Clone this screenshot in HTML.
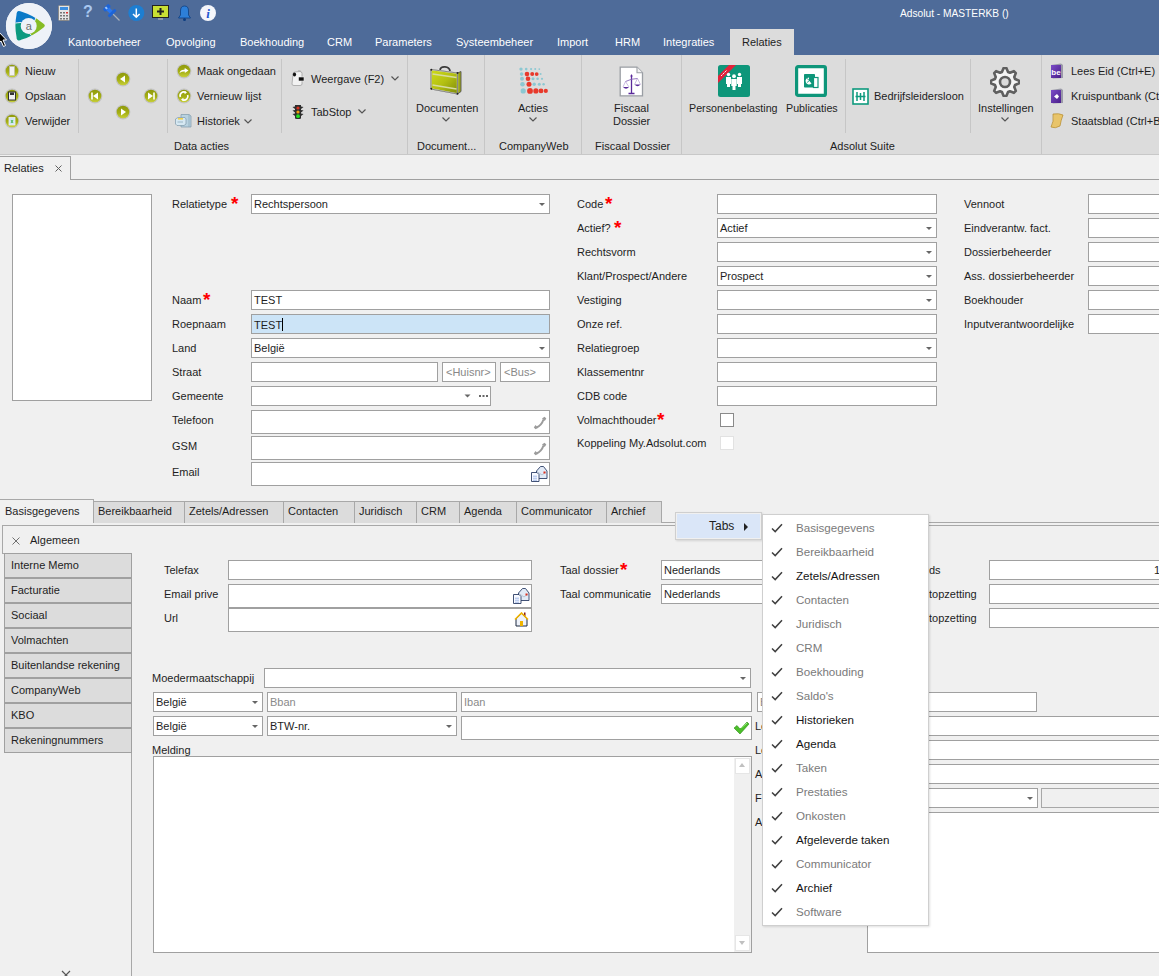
<!DOCTYPE html>
<html><head><meta charset="utf-8">
<style>
*{box-sizing:border-box;margin:0;padding:0}
html,body{width:1159px;height:976px;overflow:hidden;background:#f0f0f0;font-family:"Liberation Sans",sans-serif;font-size:11px;color:#1e1e1e}
.a{position:absolute}
.t{position:absolute;white-space:nowrap;line-height:13px}
#hdr{position:absolute;left:0;top:0;width:1159px;height:55px;background:#4e6b99}
.mi{position:absolute;top:36px;color:#fff;line-height:13px;white-space:nowrap}
#rib{position:absolute;left:0;top:55px;width:1159px;height:100px;background:#dcdcdc;border-bottom:1px solid #c8c8c8}
.sep{position:absolute;top:4px;width:1px;height:74px;background:#c4c4c4}
.gsep{position:absolute;top:0;width:1px;height:99px;background:#c4c4c4}
.gl{position:absolute;top:85px;line-height:13px;white-space:nowrap;color:#1e1e1e}
.inp{position:absolute;background:#fff;border:1px solid #a0a0a0;height:20px}
.dd::after{content:"";position:absolute;right:4px;top:8px;border-left:3px solid transparent;border-right:3px solid transparent;border-top:3px solid #666}
.it{position:absolute;left:2px;top:3px;line-height:13px;white-space:nowrap}
.req{position:absolute;color:#f00;font-size:19px;font-weight:bold;line-height:13px}
.chk{position:absolute;width:14px;height:14px;background:#fff;border:1px solid #8a8a8a}
.tab{position:absolute;top:501px;height:22px;background:#dcdcdc;border:1px solid #a8a8a8;border-bottom:none}
.tab span{position:absolute;left:4px;top:3px;line-height:13px;white-space:nowrap}
.nav{position:absolute;left:4px;width:128px;height:25px;background:#dcdcdc;border:1px solid #a0a0a0}
.nav span{position:absolute;left:6px;top:5px;line-height:13px;white-space:nowrap}
.mn{position:absolute;left:33px;line-height:14px;white-space:nowrap;font-size:12px}
.mn.g{color:#8c8c8c}
.ck{position:absolute;left:8px;width:12px;height:10px}
</style></head><body>

<!-- HEADER -->
<div id="hdr">
  <div class="a" style="left:6px;top:3px;width:46px;height:46px;border-radius:50%;background:#fff"></div>
  <div class="t" style="left:900px;top:7px;color:#fff;font-size:10.2px">Adsolut - MASTERKB ()</div>
  <div class="mi" style="left:68px">Kantoorbeheer</div>
  <div class="mi" style="left:166px">Opvolging</div>
  <div class="mi" style="left:240px">Boekhouding</div>
  <div class="mi" style="left:327px">CRM</div>
  <div class="mi" style="left:375px">Parameters</div>
  <div class="mi" style="left:456px">Systeembeheer</div>
  <div class="mi" style="left:557px">Import</div>
  <div class="mi" style="left:615px">HRM</div>
  <div class="mi" style="left:663px">Integraties</div>
  <div class="a" style="left:730px;top:29px;width:64px;height:26px;background:#dcdcdc"></div>
  <div class="mi" style="left:742px;color:#1e1e1e">Relaties</div>
</div>

<!-- RIBBON -->
<div id="rib"></div>
<svg width="0" height="0" style="position:absolute"><defs>
<linearGradient id="olv" x1="0" y1="0" x2="0" y2="1"><stop offset="0" stop-color="#8f9a0c"/><stop offset="0.55" stop-color="#a4ae14"/><stop offset="1" stop-color="#c8d03a"/></linearGradient>
<linearGradient id="brf" x1="0" y1="0" x2="1" y2="1"><stop offset="0" stop-color="#cfdc1a"/><stop offset="0.5" stop-color="#b4c012"/><stop offset="1" stop-color="#7e8a0a"/></linearGradient>
<linearGradient id="prp" x1="0" y1="0" x2="1" y2="1"><stop offset="0" stop-color="#7b4cc8"/><stop offset="1" stop-color="#4a1f8a"/></linearGradient>
</defs></svg>
<svg class="a" style="left:5px;top:2px" width="48" height="48" viewBox="0 0 48 48"><defs><clipPath id="lgc"><path d="M21.77,11.80 Q33.03,15.31 42.23,22.70 Q47.50,25.50 42.23,28.39 Q33.06,35.93 21.77,39.61 Q16.50,42.50 16.50,36.80 Q14.30,25.75 16.50,14.70 Q16.50,9.00 21.77,11.80 Z"/></clipPath></defs><g transform="translate(-5,-2)"><circle cx="28.9" cy="25.9" r="23" fill="#eef2f8"/><g clip-path="url(#lgc)"><path d="M34.83,20.76 L36.73,14.43 L38.96,-2.29 L46.01,1.40 L51.85,6.82 L56.05,13.58 L58.33,21.21 L58.52,29.17 L56.61,36.90 L52.74,43.85 L47.17,49.54 L34.17,38.79 L29.81,33.82 Z" fill="#86bc25"/><path d="M29.81,33.82 L34.17,38.79 L47.17,49.54 L40.06,53.67 L32.10,55.71 L23.88,55.51 L16.02,53.09 L9.12,48.63 L3.68,42.46 L0.13,35.05 L-1.28,26.95 L15.01,22.99 L21.51,22.39 Z" fill="#0c9a80"/><path d="M21.51,22.39 L15.01,22.99 L-1.28,26.95 L-0.64,19.66 L1.74,12.75 L5.72,6.62 L11.07,1.63 L17.46,-1.92 L24.52,-3.81 L31.84,-3.94 L38.96,-2.29 L36.73,14.43 L34.83,20.76 Z" fill="#0a7ac8"/><path d="M34.83,20.76 Q37.30,13.61 38.96,-2.29" fill="none" stroke="#eef2f8" stroke-width="0.9"/><path d="M29.81,33.82 Q34.56,39.71 47.17,49.54" fill="none" stroke="#eef2f8" stroke-width="0.9"/><path d="M21.51,22.39 Q14.03,22.78 -1.28,26.95" fill="none" stroke="#eef2f8" stroke-width="0.9"/></g><circle cx="28.7" cy="25.9" r="8" fill="#eef2f8"/><text x="28.7" y="29.5" font-family="Liberation Sans" font-size="11" fill="#6d6d6d" text-anchor="middle">a</text></g></svg>
<svg class="a" style="left:-2px;top:31px" width="10" height="18" viewBox="0 0 10 18"><path d="M0.5 0.5 L0.5 12 L3 10 L5.5 15.5 L7.5 14.5 L5 9 L8.5 9 Z" fill="#000" stroke="#fff" stroke-width="1"/></svg>
<svg class="a" style="left:58px;top:5px" width="12" height="16" viewBox="0 0 12 16"><rect x="0.5" y="0.5" width="11" height="15" rx="1" fill="#e6e6e6" stroke="#8a8a8a"/><rect x="2" y="2" width="8" height="3" fill="#3d8fe0"/><g fill="#777"><rect x="2" y="7" width="2" height="1.5"/><rect x="5" y="7" width="2" height="1.5"/><rect x="8" y="7" width="2" height="1.5" fill="#d33"/><rect x="2" y="10" width="2" height="1.5"/><rect x="5" y="10" width="2" height="1.5"/><rect x="8" y="10" width="2" height="1.5"/><rect x="2" y="13" width="2" height="1.5"/><rect x="5" y="13" width="2" height="1.5"/><rect x="8" y="13" width="2" height="1.5"/></g></svg>
<div class="t" style="left:83px;top:3px;font-size:16px;line-height:18px;color:#a9c8f0;font-weight:bold">?</div>
<svg class="a" style="left:103px;top:4px" width="18" height="18" viewBox="0 0 18 18"><path d="M9.5 9.5 L16.5 16.5" stroke="#a8b0b8" stroke-width="1.3"/><g transform="rotate(-45 7 7)"><rect x="3" y="0.5" width="8" height="4" rx="1.5" fill="#1c64d8"/><rect x="5" y="4" width="4" height="5" fill="#2a78f0"/><rect x="2" y="8.5" width="10" height="3" rx="1" fill="#1c64d8"/><rect x="5.5" y="1" width="2" height="2.5" fill="#9cc8ff"/></g></svg>
<svg class="a" style="left:128px;top:5px" width="17" height="17" viewBox="0 0 17 17"><circle cx="8.3" cy="8" r="8" fill="#1d7ed2"/><path d="M8.3 3.5 V12 M5 9 L8.3 12.3 L11.6 9" fill="none" stroke="#fff" stroke-width="1.5"/></svg>
<svg class="a" style="left:152px;top:5px" width="17" height="16" viewBox="0 0 17 16"><rect x="0.5" y="0.5" width="16" height="12" fill="#c8e034" stroke="#222"/><path d="M8.5 3 V10 M5 6.5 H12" stroke="#222" stroke-width="2"/><rect x="6" y="13" width="5" height="2" fill="#8896aa"/></svg>
<svg class="a" style="left:178px;top:5px" width="13" height="16" viewBox="0 0 13 16"><path d="M6.5 1 Q10.5 1 10.5 6 L10.5 10 L12.5 13 L0.5 13 L2.5 10 L2.5 6 Q2.5 1 6.5 1 Z" fill="#2d7fd8" stroke="#0d3d80" stroke-width="0.8"/><circle cx="6.5" cy="14.5" r="1.5" fill="#0d3d80"/></svg>
<svg class="a" style="left:200px;top:5px" width="17" height="17" viewBox="0 0 17 17"><circle cx="8" cy="8" r="8" fill="#f4f6fb"/><text x="8" y="13" font-family="Liberation Serif" font-style="italic" font-weight="bold" font-size="13" fill="#2355d0" text-anchor="middle">i</text></svg>
<div class="a" style="left:78px;top:59px;width:1px;height:74px;background:#c6c6c6"></div>
<div class="a" style="left:167px;top:59px;width:1px;height:74px;background:#c6c6c6"></div>
<div class="a" style="left:281px;top:59px;width:1px;height:74px;background:#c6c6c6"></div>
<div class="a" style="left:845px;top:59px;width:1px;height:74px;background:#c6c6c6"></div>
<div class="a" style="left:970px;top:59px;width:1px;height:74px;background:#c6c6c6"></div>
<div class="a" style="left:407px;top:55px;width:1px;height:99px;background:#c6c6c6"></div>
<div class="a" style="left:484px;top:55px;width:1px;height:99px;background:#c6c6c6"></div>
<div class="a" style="left:581px;top:55px;width:1px;height:99px;background:#c6c6c6"></div>
<div class="a" style="left:681px;top:55px;width:1px;height:99px;background:#c6c6c6"></div>
<div class="a" style="left:1041px;top:55px;width:1px;height:99px;background:#c6c6c6"></div>
<svg class="a" style="left:4px;top:63px" width="16" height="16" viewBox="0 0 16 16"><circle cx="8" cy="8" r="7.4" fill="#c4c4c4"/><circle cx="8" cy="8" r="6.3" fill="url(#olv)"/><rect x="5.5" y="3.5" width="5" height="9" fill="#f2f2f2" stroke="#bbb" stroke-width="0.6"/></svg>
<svg class="a" style="left:4px;top:88px" width="16" height="16" viewBox="0 0 16 16"><circle cx="8" cy="8" r="7.4" fill="#c4c4c4"/><circle cx="8" cy="8" r="6.3" fill="url(#olv)"/><rect x="4.5" y="4" width="7" height="8" fill="#f0f0f0" stroke="#333" stroke-width="1"/><rect x="6" y="4.5" width="4" height="2.5" fill="#333"/></svg>
<svg class="a" style="left:4px;top:113px" width="16" height="16" viewBox="0 0 16 16"><circle cx="8" cy="8" r="7.4" fill="#c4c4c4"/><circle cx="8" cy="8" r="6.3" fill="url(#olv)"/><rect x="5" y="4.5" width="6" height="7.5" fill="#cfe6f5" stroke="#eee" stroke-width="0.8"/><path d="M7 7 L9 10 M9 7 L7 10" stroke="#3a3" stroke-width="0.8"/></svg>
<div class="t" style="left:25px;top:65px;">Nieuw</div>
<div class="t" style="left:25px;top:90px;">Opslaan</div>
<div class="t" style="left:25px;top:115px;">Verwijder</div>
<svg class="a" style="left:115px;top:71px" width="16" height="16" viewBox="0 0 16 16"><circle cx="8" cy="8" r="7.4" fill="#c4c4c4"/><circle cx="8" cy="8" r="6.3" fill="url(#olv)"/><path d="M10 4.5 L5 8 L10 11.5 Z" fill="#fff"/></svg>
<svg class="a" style="left:115px;top:104px" width="16" height="16" viewBox="0 0 16 16"><circle cx="8" cy="8" r="7.4" fill="#c4c4c4"/><circle cx="8" cy="8" r="6.3" fill="url(#olv)"/><path d="M6 4.5 L11 8 L6 11.5 Z" fill="#fff"/></svg>
<svg class="a" style="left:87px;top:88px" width="16" height="16" viewBox="0 0 16 16"><circle cx="8" cy="8" r="7.4" fill="#c4c4c4"/><circle cx="8" cy="8" r="6.3" fill="url(#olv)"/><path d="M5 4.5 V11.5" stroke="#fff" stroke-width="1.6"/><path d="M11 4.5 L6 8 L11 11.5 Z" fill="#fff"/></svg>
<svg class="a" style="left:143px;top:88px" width="16" height="16" viewBox="0 0 16 16"><circle cx="8" cy="8" r="7.4" fill="#c4c4c4"/><circle cx="8" cy="8" r="6.3" fill="url(#olv)"/><path d="M11 4.5 V11.5" stroke="#fff" stroke-width="1.6"/><path d="M5 4.5 L10 8 L5 11.5 Z" fill="#fff"/></svg>
<svg class="a" style="left:176px;top:63px" width="16" height="16" viewBox="0 0 16 16"><circle cx="8" cy="8" r="7.4" fill="#c4c4c4"/><circle cx="8" cy="8" r="6.3" fill="url(#olv)"/><path d="M3.5 10 Q4.5 6.5 8.5 6.8 L8.8 5 L12.5 7.6 L8.8 10 L8.8 8.6 Q6 8.4 3.5 10 Z" fill="#fff"/></svg>
<svg class="a" style="left:176px;top:88px" width="16" height="16" viewBox="0 0 16 16"><circle cx="8" cy="8" r="7.4" fill="#c4c4c4"/><circle cx="8" cy="8" r="6.3" fill="url(#olv)"/><path d="M4.3 9 A3.8 3.8 0 0 1 9.5 4.3" fill="none" stroke="#fff" stroke-width="1.7"/><path d="M8.5 2.8 L11 4.6 L8.6 6.2 Z" fill="#fff"/><path d="M11.7 7 A3.8 3.8 0 0 1 6.5 11.7" fill="none" stroke="#fff" stroke-width="1.7"/><path d="M7.5 13.2 L5 11.4 L7.4 9.8 Z" fill="#fff"/></svg>
<svg class="a" style="left:175px;top:114px" width="17" height="14" viewBox="0 0 17 14"><path d="M6 0.5 H14 L16 2 V13 H6 Z" fill="#b8d2e0" stroke="#7e9aaa" stroke-width="0.7"/><path d="M14 0.5 V13" stroke="#8eaabb" stroke-width="0.8"/><path d="M0.5 5 L3 3.5 H10 L11 5 V10 L9 11.5 H2 L0.5 10 Z" fill="#d6e8f2" stroke="#7e9aaa" stroke-width="0.7"/><rect x="3" y="4" width="5" height="1.6" fill="#f2d24a"/><path d="M2.5 8 H8" stroke="#8eaabb" stroke-width="0.8"/></svg>
<div class="t" style="left:197px;top:65px;">Maak ongedaan</div>
<div class="t" style="left:197px;top:90px;">Vernieuw lijst</div>
<div class="t" style="left:197px;top:115px;">Historiek</div>
<svg class="a" style="left:244px;top:119px" width="8" height="5" viewBox="0 0 8 5"><path d="M0.5 0.5 L4 4 L7.5 0.5" fill="none" stroke="#555" stroke-width="1.2"/></svg>
<div class="t" style="left:174px;top:140px;">Data acties</div>
<svg class="a" style="left:291px;top:70px" width="14" height="16" viewBox="0 0 14 16"><path d="M2 4 Q2 2 4 2 L9 1.5 Q11 1.5 11 3.5 L11 14 Q11 15.5 9 15.5 L3 15.5 Q1 15.5 1 14 Z" fill="#f2f2f2" stroke="#9a9a9a" stroke-width="0.7"/><ellipse cx="3.5" cy="4.5" rx="1.6" ry="2" fill="#111"/><rect x="7.5" y="7" width="5.5" height="4" fill="#111" stroke="#eee" stroke-width="0.6"/><path d="M7 0.8 Q9 0 10 1.5" fill="none" stroke="#aaa" stroke-width="0.8"/></svg>
<div class="t" style="left:311px;top:73px;">Weergave (F2)</div>
<svg class="a" style="left:391px;top:76px" width="8" height="5" viewBox="0 0 8 5"><path d="M0.5 0.5 L4 4 L7.5 0.5" fill="none" stroke="#555" stroke-width="1.2"/></svg>
<svg class="a" style="left:292px;top:104px" width="12" height="16" viewBox="0 0 12 16"><path d="M3 1 H9 L9 2.5 L11.5 3 L9 5 V6 L11.5 6.5 L9 8.5 V9.5 L11.5 10 L9 12 V14.5 Q6 15.5 3 14.5 V12 L0.5 10 L3 9.5 V8.5 L0.5 6.5 L3 6 V5 L0.5 3 L3 2.5 Z" fill="#2e2e2e"/><circle cx="6" cy="4" r="1.6" fill="#d8321e"/><circle cx="6" cy="8" r="1.6" fill="#f29a0e"/><circle cx="6" cy="12.2" r="1.9" fill="#22e022"/></svg>
<div class="t" style="left:311px;top:106px;">TabStop</div>
<svg class="a" style="left:358px;top:109px" width="8" height="5" viewBox="0 0 8 5"><path d="M0.5 0.5 L4 4 L7.5 0.5" fill="none" stroke="#555" stroke-width="1.2"/></svg>
<svg class="a" style="left:428px;top:64px" width="36" height="32" viewBox="0 0 36 32"><path d="M12 6 Q12.5 2.5 17 2.8 Q21.5 3.2 22 7" fill="none" stroke="#3a3a3a" stroke-width="1.8"/><path d="M3 5.5 L29.5 9 L33 7.5 L33 27.5 L29.5 30 L3 25 Z" fill="#9aa414" stroke="#555" stroke-width="0.9"/><path d="M3 5.5 L29.5 9 L29.5 30 L3 25 Z" fill="url(#brf)" stroke="#e8e8e8" stroke-width="1.3"/><path d="M4.5 10 L28.5 13.5 M4.5 21 L28.5 25" stroke="#d6dba0" stroke-width="1.3"/><path d="M3 5.5 L29.5 9 L29.5 30 L3 25 Z" fill="none" stroke="#444" stroke-width="0.6"/><circle cx="3.3" cy="5.8" r="1" fill="#222"/><circle cx="29.5" cy="9" r="1" fill="#222"/><circle cx="29.5" cy="29.8" r="1" fill="#222"/><circle cx="3.3" cy="24.8" r="1" fill="#222"/></svg>
<div class="t" style="left:416px;top:102px;">Documenten</div>
<svg class="a" style="left:442px;top:117px" width="8" height="5" viewBox="0 0 8 5"><path d="M0.5 0.5 L4 4 L7.5 0.5" fill="none" stroke="#555" stroke-width="1.2"/></svg>
<div class="t" style="left:417px;top:140px;">Document...</div>
<svg class="a" style="left:510px;top:62px" width="40" height="36" viewBox="0 0 40 36"><circle cx="11.0" cy="7.1" r="1.7" fill="#8cc8d2"/><circle cx="16.2" cy="7.1" r="1.3" fill="#8cc8d2"/><circle cx="21.1" cy="7.1" r="1.1" fill="#8cc8d2"/><circle cx="25.2" cy="7.1" r="1.0" fill="#8cc8d2"/><circle cx="29.3" cy="7.1" r="0.9" fill="#8cc8d2"/><circle cx="11.6" cy="12.1" r="1.8" fill="#8cc8d2"/><circle cx="17.0" cy="12.1" r="2.3" fill="#e8392b"/><circle cx="22.2" cy="12.1" r="2.0" fill="#e8392b"/><circle cx="26.7" cy="12.1" r="1.9" fill="#e8392b"/><circle cx="30.6" cy="12.1" r="1.0" fill="#8cc8d2"/><circle cx="12.0" cy="16.8" r="2.0" fill="#8cc8d2"/><circle cx="18.0" cy="16.8" r="2.3" fill="#e8392b"/><circle cx="23.0" cy="16.8" r="1.5" fill="#8cc8d2"/><circle cx="27.6" cy="16.8" r="1.3" fill="#8cc8d2"/><circle cx="32.0" cy="16.8" r="1.1" fill="#8cc8d2"/><circle cx="12.5" cy="22.2" r="2.3" fill="#8cc8d2"/><circle cx="19.0" cy="22.2" r="2.5" fill="#e8392b"/><circle cx="24.2" cy="22.2" r="1.7" fill="#8cc8d2"/><circle cx="29.3" cy="22.2" r="1.5" fill="#8cc8d2"/><circle cx="33.6" cy="22.2" r="1.2" fill="#8cc8d2"/><circle cx="13.2" cy="28.9" r="2.6" fill="#8cc8d2"/><circle cx="20.0" cy="28.9" r="2.9" fill="#e8392b"/><circle cx="25.9" cy="28.9" r="2.6" fill="#e8392b"/><circle cx="31.0" cy="28.9" r="2.4" fill="#e8392b"/><circle cx="35.8" cy="28.9" r="2.1" fill="#e8392b"/></svg>
<div class="t" style="left:518px;top:102px;">Acties</div>
<svg class="a" style="left:529px;top:117px" width="8" height="5" viewBox="0 0 8 5"><path d="M0.5 0.5 L4 4 L7.5 0.5" fill="none" stroke="#555" stroke-width="1.2"/></svg>
<div class="t" style="left:499px;top:140px;">CompanyWeb</div>
<svg class="a" style="left:619px;top:66px" width="25" height="31" viewBox="0 0 25 31"><path d="M1.2 1.2 H18 L23.5 6.7 V29.8 H1.2 Z" fill="#fff" stroke="#9a9ea4" stroke-width="1.3"/><path d="M18 1.2 V6.7 H23.5" fill="#f2f2f2" stroke="#9a9ea4" stroke-width="1.1"/><path d="M12.5 9 V27 M9.5 27.5 H15.5" stroke="#5a2a9a" stroke-width="1.3"/><path d="M6.5 15.5 Q12.5 12.5 18.5 12.5" fill="none" stroke="#8a6ab8" stroke-width="0.9"/><path d="M4 21 Q7 24.5 10 21 Z" fill="#5a2a9a"/><path d="M15.5 18.5 Q18.5 22 21.5 18.5 Z" fill="#5a2a9a"/><path d="M6.5 15.5 L4 21 M6.5 15.5 L10 21 M18.5 12.5 L15.5 18.5 M18.5 12.5 L21.5 18.5" stroke="#a890cc" stroke-width="0.6"/><path d="M12.5 8 L11.3 10.5 H13.7 Z" fill="#5a2a9a"/></svg>
<div class="t" style="left:614px;top:102px;">Fiscaal</div>
<div class="t" style="left:613px;top:115px;">Dossier</div>
<div class="t" style="left:595px;top:140px;">Fiscaal Dossier</div>
<svg class="a" style="left:718px;top:65px" width="32" height="32" viewBox="0 0 32 32"><defs><clipPath id="pbc"><rect x="0" y="0" width="32" height="32" rx="2.5"/></clipPath></defs><rect x="0" y="0" width="32" height="32" rx="2.5" fill="#0e967a"/><g clip-path="url(#pbc)"><path d="M0 11 L11 0 L18 0 L0 18 Z" fill="#e3213a"/></g><g fill="#fff"><circle cx="10.5" cy="9.5" r="1.7"/><circle cx="16" cy="11.2" r="1.9"/><circle cx="21.5" cy="9.5" r="1.7"/><path d="M8 12 H13 V19 H12 V22 H9 V19 H8 Z M13.3 14 H18.7 V21 H17.5 V25 H14.5 V21 H13.3 Z M19 12 H24 V19 H23 V22 H20 V19 H19 Z"/></g><path d="M3 11 L4.5 9.5 M5 9 L6.5 7.5 M7 7 L8.5 5.5" stroke="#fff" stroke-width="0.9"/></svg>
<div class="t" style="left:689px;top:102px;font-size:10.7px">Personenbelasting</div>
<svg class="a" style="left:795px;top:65px" width="32" height="32" viewBox="0 0 32 32"><rect x="1.6" y="1.6" width="28.8" height="28.8" rx="1.5" fill="#fff" stroke="#0e967a" stroke-width="3.2"/><rect x="9" y="9" width="11" height="13.5" rx="0.8" fill="#0e967a"/><rect x="18.5" y="12.5" width="4.5" height="10" fill="#fff" stroke="#0e967a" stroke-width="1.2"/><path d="M14 12.5 A3.5 3.5 0 1 0 16.5 18.5 L14 15.5 Z" fill="#fff"/><path d="M12 13.5 L14.5 15.5 L12 17.5" fill="none" stroke="#0e967a" stroke-width="0.8"/></svg>
<div class="t" style="left:786px;top:102px;font-size:10.7px">Publicaties</div>
<svg class="a" style="left:852px;top:88px" width="17" height="17" viewBox="0 0 17 17"><rect x="1" y="1" width="15" height="15" fill="#fff" stroke="#0e9a7e" stroke-width="1.6"/><path d="M5 4 V13 M8.5 5 V12 M12 4 V13 M3.5 8.5 H13.5" stroke="#0e9a7e" stroke-width="1.5"/></svg>
<div class="t" style="left:874px;top:90px;">Bedrijfsleidersloon</div>
<div class="t" style="left:830px;top:140px;">Adsolut Suite</div>
<svg class="a" style="left:990px;top:67px" width="30" height="30" viewBox="0 0 30 30"><polygon points="13.63,1.07 16.37,1.07 18.05,4.95 19.95,5.74 23.88,4.18 25.82,6.12 24.26,10.05 25.05,11.95 28.93,13.63 28.93,16.37 25.05,18.05 24.26,19.95 25.82,23.88 23.88,25.82 19.95,24.26 18.05,25.05 16.37,28.93 13.63,28.93 11.95,25.05 10.05,24.26 6.12,25.82 4.18,23.88 5.74,19.95 4.95,18.05 1.07,16.37 1.07,13.63 4.95,11.95 5.74,10.05 4.18,6.12 6.12,4.18 10.05,5.74 11.95,4.95" fill="#f4f4f4" stroke="#5f5f5f" stroke-width="2.6" stroke-linejoin="round"/><circle cx="15" cy="15" r="5" fill="#dcdcdc" stroke="#5f5f5f" stroke-width="2.6"/></svg>
<div class="t" style="left:978px;top:102px;">Instellingen</div>
<svg class="a" style="left:1001px;top:117px" width="8" height="5" viewBox="0 0 8 5"><path d="M0.5 0.5 L4 4 L7.5 0.5" fill="none" stroke="#555" stroke-width="1.2"/></svg>
<svg class="a" style="left:1050px;top:63px" width="14" height="16" viewBox="0 0 14 16"><path d="M1 2 L11 0.5 L13 2 L13 15 L3 15.5 L1 14 Z" fill="#9a9aa8"/><rect x="1" y="2" width="10" height="13" fill="url(#prp)"/><text x="6" y="12" font-family="Liberation Sans" font-weight="bold" font-size="8" fill="#fff" text-anchor="middle">be</text></svg>
<div class="t" style="left:1071px;top:65px;">Lees Eid (Ctrl+E)</div>
<svg class="a" style="left:1050px;top:88px" width="14" height="16" viewBox="0 0 14 16"><path d="M1 2 L11 0.5 L13 2 L13 15 L3 15.5 L1 14 Z" fill="#9a9aa8"/><rect x="1" y="2" width="10" height="13" fill="url(#prp)"/><path d="M4 8.5 L7 6 L9 8.5 L7 11 Z" fill="#fff"/></svg>
<div class="t" style="left:1071px;top:90px;">Kruispuntbank (Ctrl+K)</div>
<svg class="a" style="left:1050px;top:113px" width="14" height="16" viewBox="0 0 14 16"><path d="M3 1 Q9 0 13 2 Q11 7 10 13 Q5 16 1 14 Q4 9 3 1 Z" fill="#e8c46a" stroke="#b48a2a" stroke-width="0.7"/></svg>
<div class="t" style="left:1071px;top:115px;">Staatsblad (Ctrl+B)</div>

<!-- DOC TAB -->
<div class="a" style="left:0;top:179px;width:1159px;height:1px;background:#a0a0a0"></div>
<div class="a" style="left:0;top:156px;width:71px;height:24px;background:#f0f0f0;border:1px solid #a0a0a0;border-left:none;border-bottom:none"></div>
<div class="t" style="left:4px;top:162px">Relaties</div>
<svg class="a" style="left:55px;top:165px" width="7" height="7"><path d="M0.5 0.5 L6.5 6.5 M6.5 0.5 L0.5 6.5" stroke="#606060" stroke-width="1"/></svg>

<!-- FORM -->
<div class="a" style="left:12px;top:194px;width:140px;height:207px;background:#fff;border:1px solid #a0a0a0"></div>
<div class="t" style="left:172px;top:198px;">Relatietype</div>
<div class="req" style="left:231px;top:197px">*</div>
<div class="inp dd" style="left:251px;top:194px;width:299px;height:20px;"><span class="it" style="">Rechtspersoon</span></div>
<div class="t" style="left:172px;top:294px;">Naam</div>
<div class="req" style="left:203px;top:293px">*</div>
<div class="inp" style="left:251px;top:290px;width:299px;height:20px;"><span class="it" style="">TEST</span></div>
<div class="t" style="left:172px;top:318px;">Roepnaam</div>
<div class="inp" style="left:251px;top:314px;width:299px;height:20px;background:#cce4f7;border-color:#a0a0a0"><span class="it" style="">TEST<span style='display:inline-block;width:1px;height:13px;background:#000;vertical-align:-2px'></span></span></div>
<div class="t" style="left:172px;top:342px;">Land</div>
<div class="inp dd" style="left:251px;top:338px;width:299px;height:20px;"><span class="it" style="">België</span></div>
<div class="t" style="left:172px;top:366px;">Straat</div>
<div class="inp" style="left:251px;top:362px;width:187px;height:20px;"></div>
<div class="inp" style="left:442px;top:362px;width:54px;height:20px;"><span class="it" style="color:#888;left:3px">&lt;Huisnr&gt;</span></div>
<div class="inp" style="left:500px;top:362px;width:50px;height:20px;"><span class="it" style="color:#888;left:3px">&lt;Bus&gt;</span></div>
<div class="t" style="left:172px;top:390px;">Gemeente</div>
<div class="inp" style="left:251px;top:386px;width:240px;height:20px;"></div>
<svg class="a" style="left:464px;top:394px" width="8" height="5"><path d="M0.5 0.5 H6.5 L3.5 3.5 Z" fill="#666"/></svg>
<svg class="a" style="left:479px;top:395px" width="9" height="2"><rect x="0" y="0" width="2" height="2" fill="#666"/><rect x="3.5" y="0" width="2" height="2" fill="#666"/><rect x="7" y="0" width="2" height="2" fill="#666"/></svg>
<div class="t" style="left:172px;top:414px;">Telefoon</div>
<div class="inp" style="left:251px;top:410px;width:299px;height:24px;"></div>
<div class="t" style="left:172px;top:440px;">GSM</div>
<div class="inp" style="left:251px;top:436px;width:299px;height:24px;"></div>
<div class="t" style="left:172px;top:466px;">Email</div>
<div class="inp" style="left:251px;top:462px;width:299px;height:24px;"></div>
<svg class="a" style="left:533px;top:416px" width="14" height="14"><path d="M3.5 11.5 Q8.5 9.5 10.5 3.5" fill="none" stroke="#9c9c9c" stroke-width="2"/><path d="M9 2.5 L11.5 0.8 L13.3 2.6 L11.8 5 Z" fill="#9c9c9c"/><path d="M2.5 9 L0.8 11.5 L2.6 13.3 L5 11.8 Z" fill="#9c9c9c"/></svg>
<svg class="a" style="left:533px;top:442px" width="14" height="14"><path d="M3.5 11.5 Q8.5 9.5 10.5 3.5" fill="none" stroke="#9c9c9c" stroke-width="2"/><path d="M9 2.5 L11.5 0.8 L13.3 2.6 L11.8 5 Z" fill="#9c9c9c"/><path d="M2.5 9 L0.8 11.5 L2.6 13.3 L5 11.8 Z" fill="#9c9c9c"/></svg>
<svg class="a" style="left:531px;top:466px" width="17" height="16"><path d="M5.5 5 L9.5 0.5 H12.5 L16 5 V12.5 H5.5 Z" fill="#e2eaf6" stroke="#2c3e66" stroke-width="0.9"/><path d="M6 5.5 L11 9 L15.5 5.5" fill="none" stroke="#9ab" stroke-width="0.6"/><rect x="12.5" y="5.5" width="2" height="2" fill="#e0301e"/><path d="M0.5 6.5 H6 L8 8.5 V15.5 H0.5 Z" fill="#f8faff" stroke="#2c3e66" stroke-width="0.9"/><path d="M2 10.2 H6 M2 12.2 H6 M2 14.2 H6" stroke="#6a8fd8" stroke-width="0.6"/></svg>
<div class="t" style="left:577px;top:198px;">Code</div>
<div class="inp" style="left:717px;top:194px;width:220px;height:20px;"></div>
<div class="t" style="left:577px;top:222px;">Actief?</div>
<div class="inp dd" style="left:717px;top:218px;width:220px;height:20px;"><span class="it" style="">Actief</span></div>
<div class="t" style="left:577px;top:246px;">Rechtsvorm</div>
<div class="inp dd" style="left:717px;top:242px;width:220px;height:20px;"></div>
<div class="t" style="left:577px;top:270px;">Klant/Prospect/Andere</div>
<div class="inp dd" style="left:717px;top:266px;width:220px;height:20px;"><span class="it" style="">Prospect</span></div>
<div class="t" style="left:577px;top:294px;">Vestiging</div>
<div class="inp dd" style="left:717px;top:290px;width:220px;height:20px;"></div>
<div class="t" style="left:577px;top:318px;">Onze ref.</div>
<div class="inp" style="left:717px;top:314px;width:220px;height:20px;"></div>
<div class="t" style="left:577px;top:342px;">Relatiegroep</div>
<div class="inp dd" style="left:717px;top:338px;width:220px;height:20px;"></div>
<div class="t" style="left:577px;top:366px;">Klassementnr</div>
<div class="inp" style="left:717px;top:362px;width:220px;height:20px;"></div>
<div class="t" style="left:577px;top:390px;">CDB code</div>
<div class="inp" style="left:717px;top:386px;width:220px;height:20px;"></div>
<div class="req" style="left:605px;top:197px">*</div>
<div class="req" style="left:614px;top:221px">*</div>
<div class="t" style="left:577px;top:414px;">Volmachthouder</div>
<div class="req" style="left:657px;top:413px">*</div>
<div class="chk" style="left:720px;top:413px"></div>
<div class="t" style="left:577px;top:437px;">Koppeling My.Adsolut.com</div>
<div class="chk" style="left:720px;top:436px;border-color:#e2e2e2;background:#fff"></div>
<div class="t" style="left:964px;top:198px;">Vennoot</div>
<div class="inp" style="left:1088px;top:194px;width:80px;height:20px;"></div>
<div class="t" style="left:964px;top:222px;">Eindverantw. fact.</div>
<div class="inp" style="left:1088px;top:218px;width:80px;height:20px;"></div>
<div class="t" style="left:964px;top:246px;">Dossierbeheerder</div>
<div class="inp" style="left:1088px;top:242px;width:80px;height:20px;"></div>
<div class="t" style="left:964px;top:270px;">Ass. dossierbeheerder</div>
<div class="inp" style="left:1088px;top:266px;width:80px;height:20px;"></div>
<div class="t" style="left:964px;top:294px;">Boekhouder</div>
<div class="inp" style="left:1088px;top:290px;width:80px;height:20px;"></div>
<div class="t" style="left:964px;top:318px;">Inputverantwoordelijke</div>
<div class="inp" style="left:1088px;top:314px;width:80px;height:20px;"></div>

<!-- TABS -->
<div class="a" style="left:0;top:522px;width:1159px;height:1px;background:#a8a8a8"></div>
<div class="a" style="left:2px;top:525px;width:1157px;height:1px;background:#a8a8a8"></div>
<div class="tab" style="left:93px;width:92px"><span>Bereikbaarheid</span></div>
<div class="tab" style="left:184px;width:100px"><span>Zetels/Adressen</span></div>
<div class="tab" style="left:283px;width:72px"><span>Contacten</span></div>
<div class="tab" style="left:354px;width:63px"><span>Juridisch</span></div>
<div class="tab" style="left:416px;width:44px"><span>CRM</span></div>
<div class="tab" style="left:459px;width:58px"><span>Agenda</span></div>
<div class="tab" style="left:516px;width:91px"><span>Communicator</span></div>
<div class="tab" style="left:606px;width:56px"><span>Archief</span></div>
<div class="a" style="left:0;top:499px;width:94px;height:24px;background:#f0f0f0;border:1px solid #a8a8a8;border-left:none;border-bottom:none"></div>
<div class="t" style="left:5px;top:505px;">Basisgegevens</div>
<div class="a" style="left:131px;top:525px;width:1px;height:451px;background:#a8a8a8"></div>
<div class="a" style="left:2px;top:525px;width:130px;height:29px;background:#f0f0f0;border:1px solid #a8a8a8;border-right:none"></div>
<svg class="a" style="left:12px;top:537px" width="8" height="8"><path d="M0.5 0.5 L7.5 7.5 M7.5 0.5 L0.5 7.5" stroke="#707070" stroke-width="1"/></svg>
<div class="t" style="left:30px;top:534px;">Algemeen</div>
<div class="nav" style="top:553px"><span>Interne Memo</span></div>
<div class="nav" style="top:578px"><span>Facturatie</span></div>
<div class="nav" style="top:603px"><span>Sociaal</span></div>
<div class="nav" style="top:628px"><span>Volmachten</span></div>
<div class="nav" style="top:653px"><span>Buitenlandse rekening</span></div>
<div class="nav" style="top:678px"><span>CompanyWeb</span></div>
<div class="nav" style="top:703px"><span>KBO</span></div>
<div class="nav" style="top:728px"><span>Rekeningnummers</span></div>
<svg class="a" style="left:61px;top:970px" width="10" height="6"><path d="M1 1 L9 9 M9 1 L1 9" stroke="#555" stroke-width="1.2"/></svg>
<div class="t" style="left:164px;top:564px;">Telefax</div>
<div class="inp" style="left:228px;top:560px;width:304px;height:20px;"></div>
<div class="t" style="left:164px;top:588px;">Email prive</div>
<div class="inp" style="left:228px;top:584px;width:304px;height:24px;"></div>
<div class="t" style="left:164px;top:612px;">Url</div>
<div class="inp" style="left:228px;top:608px;width:304px;height:24px;"></div>
<svg class="a" style="left:513px;top:588px" width="17" height="16"><path d="M5.5 5 L9.5 0.5 H12.5 L16 5 V12.5 H5.5 Z" fill="#e2eaf6" stroke="#2c3e66" stroke-width="0.9"/><path d="M6 5.5 L11 9 L15.5 5.5" fill="none" stroke="#9ab" stroke-width="0.6"/><rect x="12.5" y="5.5" width="2" height="2" fill="#e0301e"/><path d="M0.5 6.5 H6 L8 8.5 V15.5 H0.5 Z" fill="#f8faff" stroke="#2c3e66" stroke-width="0.9"/><path d="M2 10.2 H6 M2 12.2 H6 M2 14.2 H6" stroke="#6a8fd8" stroke-width="0.6"/></svg>
<svg class="a" style="left:514px;top:612px" width="15" height="15"><rect x="10" y="0.5" width="1.5" height="4" fill="#8a1a10"/><path d="M2 7 L7.5 1.5 L13 7 V14 H2 Z" fill="#eef2fa" stroke="#1e2a40" stroke-width="1"/><path d="M1 7.5 L7.5 1 L14 7.5" fill="none" stroke="#f0b400" stroke-width="1.6"/><rect x="6" y="9" width="3" height="5" fill="#f0b400"/></svg>
<div class="t" style="left:152px;top:672px;">Moedermaatschappij</div>
<div class="inp dd" style="left:264px;top:668px;width:487px;height:20px;"></div>
<div class="inp dd" style="left:153px;top:692px;width:110px;height:20px;"><span class="it" style="">België</span></div>
<div class="inp" style="left:267px;top:692px;width:190px;height:20px;"><span class="it" style="color:#8a8a8a">Bban</span></div>
<div class="inp" style="left:461px;top:692px;width:291px;height:20px;"><span class="it" style="color:#8a8a8a">Iban</span></div>
<div class="inp dd" style="left:153px;top:716px;width:110px;height:20px;"><span class="it" style="">België</span></div>
<div class="inp dd" style="left:267px;top:716px;width:190px;height:20px;"><span class="it" style="">BTW-nr.</span></div>
<div class="inp" style="left:461px;top:716px;width:291px;height:24px;"></div>
<svg class="a" style="left:733px;top:721px" width="17" height="14"><path d="M1 7 L4 4.5 L7 8 L14 1 L16 3 L7 13 Z" fill="#4cbf2a" stroke="#2c8a18" stroke-width="0.6"/><path d="M8 7 L14 2" stroke="#a8f090" stroke-width="1"/></svg>
<div class="t" style="left:152px;top:744px;">Melding</div>
<div class="inp" style="left:153px;top:756px;width:599px;height:197px"></div>
<div class="a" style="left:734px;top:758px;width:17px;height:194px;background:#f0f0f0"></div>
<div class="a" style="left:735px;top:758px;width:15px;height:16px;background:#fff;border:1px solid #e6e6e6"></div>
<div class="a" style="left:739px;top:763px;width:0;height:0;border-left:3.5px solid transparent;border-right:3.5px solid transparent;border-bottom:4px solid #c0c0c0"></div>
<div class="a" style="left:735px;top:935px;width:15px;height:16px;background:#fff;border:1px solid #e6e6e6"></div>
<div class="a" style="left:739px;top:941px;width:0;height:0;border-left:3.5px solid transparent;border-right:3.5px solid transparent;border-top:4px solid #c0c0c0"></div>
<div class="t" style="left:560px;top:564px;">Taal dossier</div>
<div class="req" style="left:620px;top:563px">*</div>
<div class="inp dd" style="left:661px;top:560px;width:120px;height:20px;"><span class="it" style="">Nederlands</span></div>
<div class="t" style="left:560px;top:588px;">Taal communicatie</div>
<div class="inp dd" style="left:661px;top:584px;width:120px;height:20px;"><span class="it" style="">Nederlands</span></div>
<div class="inp" style="left:757px;top:692px;width:280px;height:20px;"><span class="it" style="color:#8a8a8a">B</span></div>
<div class="t" style="left:929px;top:564px;">ds</div>
<div class="inp" style="left:989px;top:560px;width:180px;height:20px;"></div>
<div class="t" style="left:1154px;top:564px">1</div>
<div class="t" style="left:929px;top:588px;">topzetting</div>
<div class="inp" style="left:989px;top:584px;width:180px;height:20px;"></div>
<div class="t" style="left:929px;top:612px;">topzetting</div>
<div class="inp" style="left:989px;top:608px;width:180px;height:20px;"></div>
<div class="t" style="left:755px;top:720px;">Lo</div>
<div class="inp" style="left:928px;top:716px;width:240px;height:20px;"></div>
<div class="t" style="left:755px;top:744px;">Lo</div>
<div class="inp" style="left:928px;top:740px;width:240px;height:20px;"></div>
<div class="t" style="left:755px;top:768px;">A</div>
<div class="inp" style="left:928px;top:764px;width:240px;height:20px;"></div>
<div class="t" style="left:755px;top:792px;">F</div>
<div class="inp dd" style="left:928px;top:788px;width:110px;height:20px;"></div>
<div class="inp" style="left:1041px;top:788px;width:130px;height:20px;background:#f0f0f0;border-color:#a8a8a8"></div>
<div class="t" style="left:755px;top:816px;">A</div>
<div class="inp" style="left:867px;top:812px;width:300px;height:141px"></div>

<!-- MENU -->
<div class="a" style="left:675px;top:512px;width:87px;height:28px;background:#f0f0f0;border:1px solid #cfcfcf;box-shadow:1px 1px 2px rgba(0,0,0,.12)"></div>
<div class="a" style="left:677px;top:514px;width:83px;height:24px;background:#dae6f8;border:1px solid #dae6f8"></div>
<div class="t" style="left:709px;top:520px;font-size:12px">Tabs</div>
<div class="a" style="left:744px;top:523px;width:0;height:0;border-top:4px solid transparent;border-bottom:4px solid transparent;border-left:4px solid #222"></div>
<div class="a" style="left:762px;top:514px;width:167px;height:412px;background:#fff;border:1px solid #cfcfcf;box-shadow:1px 1px 2px rgba(0,0,0,.12)"></div>
<div class="t" style="left:796px;top:521px;font-size:11.6px;color:#7a7a7a">Basisgegevens</div>
<svg class="a" style="left:771px;top:523px" width="12" height="10"><path d="M1 5.5 L4.2 8.6 L11 1.2" fill="none" stroke="#404040" stroke-width="1.5"/></svg>
<div class="t" style="left:796px;top:545px;font-size:11.6px;color:#7a7a7a">Bereikbaarheid</div>
<svg class="a" style="left:771px;top:547px" width="12" height="10"><path d="M1 5.5 L4.2 8.6 L11 1.2" fill="none" stroke="#404040" stroke-width="1.5"/></svg>
<div class="t" style="left:796px;top:569px;font-size:11.6px;color:#141414">Zetels/Adressen</div>
<svg class="a" style="left:771px;top:571px" width="12" height="10"><path d="M1 5.5 L4.2 8.6 L11 1.2" fill="none" stroke="#404040" stroke-width="1.5"/></svg>
<div class="t" style="left:796px;top:593px;font-size:11.6px;color:#7a7a7a">Contacten</div>
<svg class="a" style="left:771px;top:595px" width="12" height="10"><path d="M1 5.5 L4.2 8.6 L11 1.2" fill="none" stroke="#404040" stroke-width="1.5"/></svg>
<div class="t" style="left:796px;top:617px;font-size:11.6px;color:#7a7a7a">Juridisch</div>
<svg class="a" style="left:771px;top:619px" width="12" height="10"><path d="M1 5.5 L4.2 8.6 L11 1.2" fill="none" stroke="#404040" stroke-width="1.5"/></svg>
<div class="t" style="left:796px;top:641px;font-size:11.6px;color:#7a7a7a">CRM</div>
<svg class="a" style="left:771px;top:643px" width="12" height="10"><path d="M1 5.5 L4.2 8.6 L11 1.2" fill="none" stroke="#404040" stroke-width="1.5"/></svg>
<div class="t" style="left:796px;top:665px;font-size:11.6px;color:#7a7a7a">Boekhouding</div>
<svg class="a" style="left:771px;top:667px" width="12" height="10"><path d="M1 5.5 L4.2 8.6 L11 1.2" fill="none" stroke="#404040" stroke-width="1.5"/></svg>
<div class="t" style="left:796px;top:689px;font-size:11.6px;color:#7a7a7a">Saldo's</div>
<svg class="a" style="left:771px;top:691px" width="12" height="10"><path d="M1 5.5 L4.2 8.6 L11 1.2" fill="none" stroke="#404040" stroke-width="1.5"/></svg>
<div class="t" style="left:796px;top:713px;font-size:11.6px;color:#141414">Historieken</div>
<svg class="a" style="left:771px;top:715px" width="12" height="10"><path d="M1 5.5 L4.2 8.6 L11 1.2" fill="none" stroke="#404040" stroke-width="1.5"/></svg>
<div class="t" style="left:796px;top:737px;font-size:11.6px;color:#141414">Agenda</div>
<svg class="a" style="left:771px;top:739px" width="12" height="10"><path d="M1 5.5 L4.2 8.6 L11 1.2" fill="none" stroke="#404040" stroke-width="1.5"/></svg>
<div class="t" style="left:796px;top:761px;font-size:11.6px;color:#7a7a7a">Taken</div>
<svg class="a" style="left:771px;top:763px" width="12" height="10"><path d="M1 5.5 L4.2 8.6 L11 1.2" fill="none" stroke="#404040" stroke-width="1.5"/></svg>
<div class="t" style="left:796px;top:785px;font-size:11.6px;color:#7a7a7a">Prestaties</div>
<svg class="a" style="left:771px;top:787px" width="12" height="10"><path d="M1 5.5 L4.2 8.6 L11 1.2" fill="none" stroke="#404040" stroke-width="1.5"/></svg>
<div class="t" style="left:796px;top:809px;font-size:11.6px;color:#7a7a7a">Onkosten</div>
<svg class="a" style="left:771px;top:811px" width="12" height="10"><path d="M1 5.5 L4.2 8.6 L11 1.2" fill="none" stroke="#404040" stroke-width="1.5"/></svg>
<div class="t" style="left:796px;top:833px;font-size:11.6px;color:#141414">Afgeleverde taken</div>
<svg class="a" style="left:771px;top:835px" width="12" height="10"><path d="M1 5.5 L4.2 8.6 L11 1.2" fill="none" stroke="#404040" stroke-width="1.5"/></svg>
<div class="t" style="left:796px;top:857px;font-size:11.6px;color:#7a7a7a">Communicator</div>
<svg class="a" style="left:771px;top:859px" width="12" height="10"><path d="M1 5.5 L4.2 8.6 L11 1.2" fill="none" stroke="#404040" stroke-width="1.5"/></svg>
<div class="t" style="left:796px;top:881px;font-size:11.6px;color:#141414">Archief</div>
<svg class="a" style="left:771px;top:883px" width="12" height="10"><path d="M1 5.5 L4.2 8.6 L11 1.2" fill="none" stroke="#404040" stroke-width="1.5"/></svg>
<div class="t" style="left:796px;top:905px;font-size:11.6px;color:#7a7a7a">Software</div>
<svg class="a" style="left:771px;top:907px" width="12" height="10"><path d="M1 5.5 L4.2 8.6 L11 1.2" fill="none" stroke="#404040" stroke-width="1.5"/></svg>

</body></html>
